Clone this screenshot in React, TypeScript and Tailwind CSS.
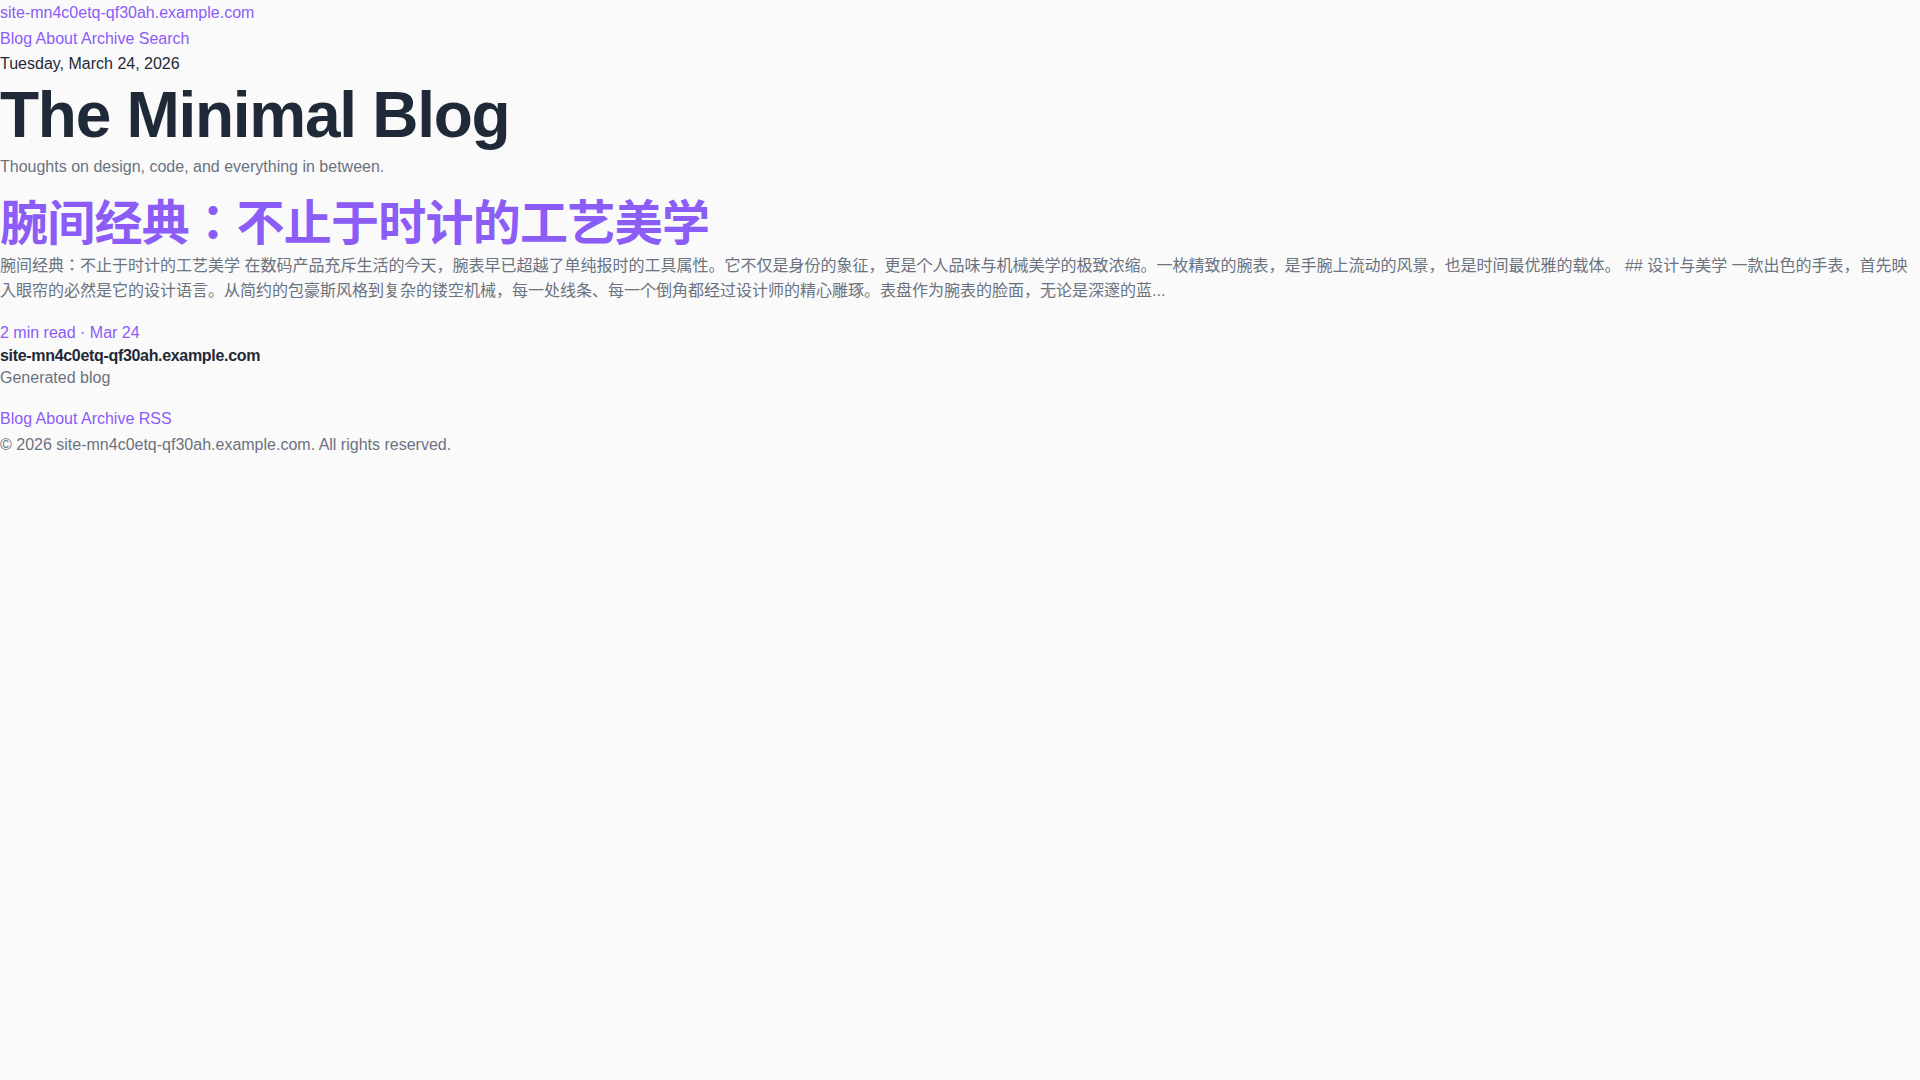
import React from "react";

const font = "font-['Liberation_Sans','Noto_Sans_CJK_JP',sans-serif]";

export default function App() {
  return (
    <div className={`min-h-screen bg-[#fafafa] ${font} text-[16px] leading-[1.6] text-[#1f2937]`}>
      <header>
        <div>
          <a href="#" className="text-[#8b5cf6]">site-mn4c0etq-qf30ah.example.com</a>
        </div>
        <nav className="text-[#8b5cf6]">
          <a href="#">Blog</a> <a href="#">About</a> <a href="#">Archive</a> <a href="#">Search</a>
        </nav>
        <div className="text-[#1f2937]">Tuesday, March 24, 2026</div>
        <h1 className="text-[64px] leading-[1.2] font-bold tracking-[-0.02em] text-[#1f2937]">The Minimal Blog</h1>
        <p className="text-[#6b7280]">Thoughts on design, code, and everything in between.</p>
      </header>
      <main>
        <article className="mt-4">
          <h2 className="text-[48px] leading-[1.2] font-bold tracking-[-0.015em] text-[#8b5cf6]">
            <a href="#">腕间经典：不止于时计的工艺美学</a>
          </h2>
          <p className="text-[#6b7280]">
            腕间经典：不止于时计的工艺美学 在数码产品充斥生活的今天，腕表早已超越了单纯报时的工具属性。它不仅是身份的象征，更是个人品味与机械美学的极致浓缩。一枚精致的腕表，是手腕上流动的风景，也是时间最优雅的载体。 ## 设计与美学 一款出色的手表，首先映入眼帘的必然是它的设计语言。从简约的包豪斯风格到复杂的镂空机械，每一处线条、每一个倒角都经过设计师的精心雕琢。表盘作为腕表的脸面，无论是深邃的蓝...
          </p>
          <div className="mt-4 text-[#8b5cf6]">2 min read · Mar 24</div>
        </article>
      </main>
      <footer>
        <div className="font-bold leading-[1.2] tracking-[-0.02em] text-[#1f2937]">site-mn4c0etq-qf30ah.example.com</div>
        <p className="text-[#6b7280]">Generated blog</p>
        <nav className="mt-4 text-[#8b5cf6]">
          <a href="#">Blog</a> <a href="#">About</a> <a href="#">Archive</a> <a href="#">RSS</a>
        </nav>
        <p className="text-[#6b7280]">© 2026 site-mn4c0etq-qf30ah.example.com. All rights reserved.</p>
      </footer>
    </div>
  );
}
